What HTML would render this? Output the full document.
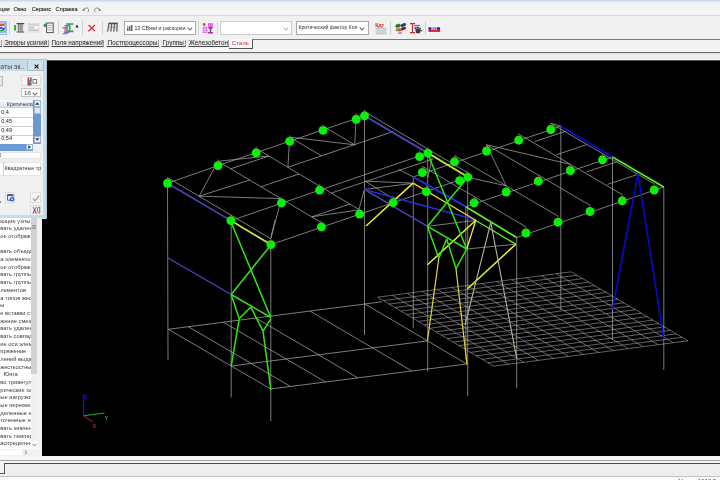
<!DOCTYPE html>
<html lang="ru">
<head>
<meta charset="utf-8">
<title>Результаты экспертизы - Сталь</title>
<style>
html,body{margin:0;padding:0;}
body>*{will-change:transform;}
body{width:720px;height:480px;overflow:hidden;position:relative;background:#f0f0f0;
 font-family:"Liberation Sans",sans-serif;font-size:6.2px;color:#202020;line-height:1;}
.abs{position:absolute;}
.t{position:absolute;white-space:nowrap;}
#topedge{left:0;top:0;width:720px;height:2px;background:linear-gradient(#c3d3e6,#e6ecf3);}
#menubar{left:0;top:2px;width:720px;height:13px;background:#f3f3f3;}
#menubar .t{top:4.8px;font-size:5.7px;color:#2c2c2c;letter-spacing:-0.06px;-webkit-text-stroke:0.15px #3a3a3a;}
#menuline{left:0;top:15px;width:720px;height:1px;background:#dadada;}
#toolbar{left:0;top:16px;width:720px;height:22.5px;background:#f1f1f1;}
.sep{position:absolute;top:5px;width:1px;height:14px;background:#d0d0d0;}
.combo{position:absolute;top:5.2px;height:13.8px;background:#fff;border:1px solid #a8a8a8;box-sizing:border-box;}
.combo .t{top:4.2px;font-size:5.4px;color:#303030;}
.chev{position:absolute;right:3.4px;top:4.2px;width:3px;height:3px;border-right:0.9px solid #555;border-bottom:0.9px solid #555;transform:rotate(45deg) scale(0.9);}
#tabrow{left:0;top:38.5px;width:720px;height:13px;background:#f2f2f2;}
.tab{position:absolute;top:1px;height:7.2px;font-size:6.3px;color:#222;border-bottom:1px solid #4a4a4a;border-right:1px solid #a2a2a2;border-left:1px solid #e4e4e4;box-sizing:border-box;background:#ececec;text-align:center;line-height:5.6px;white-space:nowrap;overflow:hidden;}
#tabline{left:252px;top:38.5px;width:468px;height:1px;background:#7a7a7a;}
#tabact{left:229px;top:38.5px;width:23.5px;height:9.5px;background:#fbfbfb;border-right:1px solid #555;border-bottom:1px solid #555;box-sizing:border-box;color:#e02020;font-size:6.1px;line-height:8px;text-align:center;}
#band{left:0;top:47.5px;width:229px;height:4px;background:#f8f8f8;}
#darkline{left:0;top:51.5px;width:720px;height:1.2px;background:#6a6a6a;}
#gap{left:0;top:52.7px;width:720px;height:6px;background:linear-gradient(#dcdcdc,#efefef 40%,#ececec);}
#vp{left:42px;top:59.6px;width:678.5px;height:396.4px;background:#000;border-top:1px solid #555;box-sizing:border-box;}
svg.cad{position:absolute;left:0;top:0;}
/* floating panel */
#fp{left:0;top:58.7px;width:46.7px;height:160.2px;background:#c7dce9;border-right:1px solid #a9bfcf;border-top:1px solid #b5c6d2;box-sizing:border-box;}
#fpbody{left:0;top:11.3px;width:42.7px;height:144px;background:#f0f0f0;}
#fpclose{left:27px;top:0.5px;width:16.5px;height:10.5px;border:1px solid #a5bccb;border-top:none;box-sizing:border-box;background:#cfe2ee;border-radius:0 0 1.5px 1.5px;}
.btn{position:absolute;background:#f6f6f6;border:1px solid #dedede;box-sizing:border-box;}
.cell{position:absolute;background:#fff;font-size:5.6px;color:#222;}
/* list pane */
#lp{left:0;top:217.5px;width:42px;height:238.5px;background:#f2f2f2;}
#lpw{left:0;top:0;width:30.6px;height:231px;background:#fff;overflow:hidden;}
#lpw .t{font-size:5.75px;color:#3c3c3c;left:0.3px;}
#sbv{left:30.6px;top:0;width:6.9px;height:231px;background:#f0f0f0;}
#sbthumb{left:30.6px;top:0;width:6.9px;height:156px;background:#d2d2d2;}
/* bottom */
#b1{left:0;top:456px;width:720px;height:4px;background:#f6f6f6;}
#b2{left:0;top:459.8px;width:720px;height:1px;background:#a4a4a4;}
#b3{left:0;top:460.8px;width:720px;height:2.2px;background:#f6f6f6;}
#b4{left:3.6px;top:462.8px;width:716.4px;height:1.2px;background:#4c4c4c;}
#b5{left:3.6px;top:464px;width:716.4px;height:11.8px;background:#eeeeee;}
#b5a{left:0;top:463px;width:3.6px;height:10.6px;background:#f3f3f3;}
#b6{left:0;top:475.8px;width:720px;height:1px;background:#c2c2c2;}
#b6a{left:0;top:473.4px;width:4.4px;height:1px;background:#555;}
#b6b{left:3.6px;top:464px;width:1px;height:10px;background:#555;}
#b7{left:0;top:476.8px;width:720px;height:3.2px;background:#fbfbfb;}
#b8{left:677.6px;top:477px;width:1px;height:3px;background:#d0d0d0;}
</style>
</head>
<body>
<div id="topedge" class="abs"></div>
<div id="menubar" class="abs">
 <span class="t" style="left:0.3px">ции</span>
 <span class="t" style="left:13.4px">Окно</span>
 <span class="t" style="left:31.8px">Сервис</span>
 <span class="t" style="left:55.6px">Справка</span>
 <svg class="abs" style="left:81px;top:2.5px" width="22" height="9" viewBox="0 0 22 9">
  <path d="M2.6 4.7 C3.8 2.7 6.4 2.3 7.4 4 C8.1 5.2 7.5 6.4 6.7 7.2" fill="none" stroke="#7c7c7c" stroke-width="0.95"/>
  <path d="M0.9 5.5 L3.1 3.5 L3.7 5.7 Z" fill="#5c5c5c"/>
  <path d="M18.6 4.7 C17.4 2.7 14.8 2.3 13.8 4 C13.1 5.2 13.7 6.4 14.5 7.2" fill="none" stroke="#7c7c7c" stroke-width="0.95"/>
  <path d="M20.3 5.5 L18.1 3.5 L17.5 5.7 Z" fill="#5c5c5c"/>
 </svg>
</div>
<div id="menuline" class="abs"></div>

<div id="toolbar" class="abs">
 <!-- selected first icon (cut off at the left) -->
 <div class="abs" style="left:-4px;top:4.5px;width:10.6px;height:14px;background:#d2e8fb;border:1px solid #86bff0;box-sizing:border-box;"></div>
 <svg class="abs" style="left:0;top:6px" width="6" height="11" viewBox="0 0 6 11">
  <rect x="-2" y="1" width="7" height="9" fill="#fff" stroke="#555" stroke-width="0.7"/>
  <rect x="-2" y="2.2" width="6.4" height="1.6" fill="#e02020"/>
  <path d="M-1 7 L1.5 5.4 L3.2 7.6 L4.6 5.6" stroke="#1a3ad0" stroke-width="1.3" fill="none"/>
  <rect x="-2" y="7.8" width="5.5" height="1.4" fill="#2a9a2a"/>
 </svg>
 <div class="sep" style="left:9.3px"></div>
 <!-- icon: green/gray result table -->
 <svg class="abs" style="left:12.5px;top:5px" width="12" height="14" viewBox="0 0 12 14">
  <rect x="1.2" y="4" width="1.9" height="5.6" fill="#2aa63c"/>
  <rect x="4.4" y="3" width="5.8" height="7.6" fill="#dcdcdc"/>
  <path d="M5.6 3V10.6 M7.3 3V10.6 M9 3V10.6" stroke="#5a5a5a" stroke-width="0.8"/>
  <path d="M4.4 5.4H10.2 M4.4 7.8H10.2" stroke="#8a8a8a" stroke-width="0.6"/>
  <path d="M3.6 2.6H11.2 M3.6 11H11.2" stroke="#4a4a4a" stroke-width="1.2"/>
 </svg>
 <!-- icon: grey lines (disabled) -->
 <svg class="abs" style="left:28px;top:7px" width="12" height="10" viewBox="0 0 12 10">
  <rect x="0.5" y="0.5" width="10.5" height="8.6" fill="#ececec" stroke="#d2d2d2" stroke-width="0.6"/>
  <path d="M1 2H10.5 M1 4.6H10.5 M1 7.2H10.5" stroke="#bcbcbc" stroke-width="1.2"/>
  <rect x="6.5" y="3.2" width="4" height="2.4" fill="#fafafa"/>
 </svg>
 <!-- icon: list with green marker -->
 <svg class="abs" style="left:42.5px;top:6px" width="12" height="12" viewBox="0 0 12 12">
  <rect x="3.6" y="1" width="6.6" height="9.6" fill="#f4f4f4" stroke="#4a4a4a" stroke-width="0.9"/>
  <path d="M4.4 3.4H9.6 M4.4 5.6H9.6 M4.4 7.8H9.6" stroke="#9a9a9a" stroke-width="0.7"/>
  <circle cx="2.3" cy="3.3" r="1.5" fill="#3aa06a" stroke="#2a6a4a" stroke-width="0.5"/>
 </svg>
 <div class="sep" style="left:58.3px"></div>
 <!-- icon: coloured I-beams -->
 <svg class="abs" style="left:61.5px;top:5.5px" width="14" height="13" viewBox="0 0 14 13">
  <path d="M0.6 5.8H5.6 M3.2 5.8V11.6 M0.6 11.6H5.6" stroke="#ea5a5a" stroke-width="1.4" fill="none"/>
  <path d="M2.4 3.6H7.4 M5 3.6V10.4 M2.4 10.4H7.4" stroke="#6274d6" stroke-width="1.4" fill="none"/>
  <path d="M4.2 2H11.4 M7.6 2V9.4 M5 9.4H11.4" stroke="#36a052" stroke-width="1.7" fill="none"/>
 </svg>
 <svg class="abs" style="left:74.6px;top:8.4px" width="4" height="5" viewBox="0 0 4 5"><path d="M2 0.4L3.6 3.6H0.4Z" fill="#222"/></svg>
 <div class="sep" style="left:82.3px"></div>
 <!-- red X -->
 <svg class="abs" style="left:86.8px;top:6.6px" width="10" height="10" viewBox="0 0 10 10">
  <path d="M1.6 2L7.8 8.2 M8 2L1.4 8.2" stroke="#dc2626" stroke-width="1.2" fill="none"/>
 </svg>
 <div class="sep" style="left:102.3px"></div>
 <!-- fork / comb icon -->
 <svg class="abs" style="left:105.6px;top:6.4px" width="13" height="11" viewBox="0 0 13 11">
  <path d="M2.6 1.4H11.6" stroke="#4e4e4e" stroke-width="1.6"/>
  <path d="M3 1.4L1.6 9.6 M5.8 1.4L4.8 9.6 M8.6 1.4L7.8 9.6 M11.2 1.4L10.8 9.6" stroke="#565656" stroke-width="1.2" fill="none"/>
  <path d="M2 5.2H11.2" stroke="#8a8a8a" stroke-width="0.8"/>
 </svg>
 <!-- combo 1 -->
 <div class="combo" style="left:124.4px;width:72px;">
  <svg class="abs" style="left:2px;top:3px" width="7" height="6" viewBox="0 0 7 6"><path d="M0.8 2.6V6 M2.8 1V6 M4.8 0V6" stroke="#333" stroke-width="1.1"/><rect x="0.2" y="0.6" width="1.2" height="1.2" fill="#d040c0"/></svg>
  <span class="t" style="left:9px;font-size:5.25px">13:СВязи и распорки</span>
  <div class="chev"></div>
 </div>
 <div class="sep" style="left:198.2px"></div>
 <!-- pink grid icon -->
 <svg class="abs" style="left:202px;top:6px" width="13" height="13" viewBox="0 0 13 13">
  <circle cx="2.2" cy="2.4" r="1.4" fill="#c84a4a"/>
  <g fill="#e45ce4">
   <rect x="0.8" y="4.6" width="1.3" height="1.3"/><rect x="2.4" y="4.6" width="1.3" height="1.3"/><rect x="4" y="4.6" width="1.3" height="1.3"/>
   <rect x="0.8" y="6.3" width="1.3" height="1.3"/><rect x="2.4" y="6.3" width="1.3" height="1.3"/><rect x="4" y="6.3" width="1.3" height="1.3"/>
   <rect x="0.8" y="8" width="1.3" height="1.3"/><rect x="2.4" y="8" width="1.3" height="1.3"/><rect x="4" y="8" width="1.3" height="1.3"/>
   <rect x="0.8" y="9.7" width="1.3" height="1.3"/><rect x="2.4" y="9.7" width="1.3" height="1.3"/><rect x="4" y="9.7" width="1.3" height="1.3"/>
  </g>
  <g fill="#d848d8"><rect x="6.1" y="1.1" width="1.3" height="3.6"/><rect x="7.8" y="1.1" width="1.3" height="3.6"/><rect x="9.5" y="1.1" width="1.3" height="3.6"/></g>
  <path d="M6 4.8H11 L10.2 6.8H6.8Z" fill="#a81cb0"/>
  <rect x="7.8" y="6.6" width="1.5" height="3.8" fill="#a81cb0"/>
  <rect x="6" y="10.1" width="5" height="1.4" fill="#a81cb0"/>
 </svg>
 <div class="abs" style="left:217.4px;top:5px;width:1px;height:14px;background:#dcdcdc;"></div>
 <!-- combo 2 -->
 <div class="combo" style="left:220px;width:72px;border-color:#cdcdcd"><div class="chev" style="border-color:#aaa"></div></div>
 <!-- combo 3 -->
 <div class="combo" style="left:296px;width:72.6px;">
  <span class="t" style="left:1.4px;top:2.6px;font-size:5.15px">Критический фактор Кпи</span>
  <div class="chev"></div>
 </div>
 <!-- Кдт grid icon -->
 <svg class="abs" style="left:374.5px;top:5.5px" width="13" height="13" viewBox="0 0 13 13">
  <path d="M0.6 6.4H11.4 M0.6 8.2H11.4 M0.6 10H11.4 M0.6 11.8H11.4" stroke="#a4b2c2" stroke-width="0.9"/>
  <path d="M2.8 5.6V12.2 M5 5.6V12.2 M7.2 5.6V12.2 M9.4 5.6V12.2" stroke="#cfd6de" stroke-width="0.6"/>
  <text x="0.3" y="5.4" font-size="5.4" fill="#d42a2a" font-family="Liberation Sans, sans-serif" font-weight="bold" letter-spacing="-0.3">Кдт</text>
 </svg>
 <div class="sep" style="left:390.3px"></div>
 <!-- coloured flags icon -->
 <svg class="abs" style="left:393.5px;top:5.5px" width="14" height="13" viewBox="0 0 14 13">
  <ellipse cx="4" cy="3.6" rx="2.8" ry="1.6" fill="#1a8a3a" transform="rotate(-20 4 3.6)"/>
  <ellipse cx="9.4" cy="3" rx="2.8" ry="1.6" fill="#2a3ab0" transform="rotate(-20 9.4 3)"/>
  <ellipse cx="4" cy="7" rx="2.6" ry="1.4" fill="#c8a020" transform="rotate(-20 4 7)"/>
  <ellipse cx="9.4" cy="6.6" rx="2.8" ry="1.6" fill="#b02020" transform="rotate(-20 9.4 6.6)"/>
  <path d="M2 5.2L12 2.6 M2 8.8L12 5.8" stroke="#222" stroke-width="0.6"/>
  <text x="4.2" y="12.4" font-size="4.6" fill="#c02020" font-family="Liberation Sans, sans-serif" font-weight="bold">G</text>
 </svg>
 <!-- I-beam with paw icon -->
 <svg class="abs" style="left:408.5px;top:5.5px" width="14" height="13" viewBox="0 0 14 13">
  <path d="M1 1.6H6 M3.5 1.6V10.6 M1 10.6H6" stroke="#c02828" stroke-width="1.1" fill="none"/>
  <path d="M5.2 3.4H11 M5.2 5.2H10" stroke="#3a48c8" stroke-width="0.9"/>
  <circle cx="9" cy="9" r="2.5" fill="#3c3c3c"/><circle cx="6.6" cy="6.8" r="1" fill="#444"/><circle cx="8.8" cy="5.8" r="1" fill="#444"/><circle cx="11" cy="6.6" r="1" fill="#444"/><circle cx="12.2" cy="8.6" r="0.9" fill="#444"/>
 </svg>
 <div class="sep" style="left:424.5px"></div>
 <!-- flag icon -->
 <svg class="abs" style="left:428px;top:8.6px" width="13" height="8" viewBox="0 0 13 8">
  <rect x="0.5" y="0.3" width="11.6" height="2.2" fill="#f4f4fa"/>
  <rect x="0.5" y="2.3" width="11.6" height="2.6" fill="#1a1ad8"/>
  <rect x="0.5" y="4.7" width="11.6" height="2.2" fill="#e02020"/>
  <text x="3.2" y="4.6" font-size="2.8" fill="#fff" font-family="Liberation Sans, sans-serif" font-weight="bold">RUS</text>
 </svg>
</div>

<div id="tabrow" class="abs">
 <div class="tab" style="left:-6px;width:7.6px;"></div>
 <div class="tab" style="left:2.6px;width:46.4px;">Эпюры усилий</div>
 <div class="tab" style="left:50.6px;width:53.4px;">Поля напряжений</div>
 <div class="tab" style="left:106.2px;width:52.6px;">Постпроцессоры</div>
 <div class="tab" style="left:160.6px;width:25.4px;">Группы</div>
 <div class="tab" style="left:188px;width:40.5px;">Железобетон</div>
</div>
<div id="tabline" class="abs"></div>
<div id="band" class="abs"></div>
<div id="tabact" class="abs">Сталь</div>
<div id="darkline" class="abs"></div>
<div id="gap" class="abs"></div>

<div id="vp" class="abs"></div>
<svg class="cad" width="720" height="480" viewBox="0 0 720 480" font-family="Liberation Sans, sans-serif">
<g stroke-linecap="butt" fill="none">
<line x1="167.5" y1="183.3" x2="218.0" y2="165.6" stroke="#a4a4a4" stroke-width="0.75"/>
<line x1="218.0" y1="165.6" x2="364.5" y2="115.8" stroke="#a4a4a4" stroke-width="0.75"/>
<line x1="230.9" y1="220.6" x2="427.9" y2="153.1" stroke="#a4a4a4" stroke-width="0.75"/>
<line x1="270.9" y1="244.6" x2="467.9" y2="177.1" stroke="#a4a4a4" stroke-width="0.75"/>
<line x1="167.5" y1="177.5" x2="270.9" y2="238.8" stroke="#a4a4a4" stroke-width="0.75"/>
<line x1="364.5" y1="111.5" x2="467.9" y2="172.8" stroke="#a4a4a4" stroke-width="0.75"/>
<line x1="218.0" y1="161.3" x2="321.4" y2="222.6" stroke="#a4a4a4" stroke-width="0.75"/>
<line x1="256.2" y1="148.5" x2="359.6" y2="209.8" stroke="#a4a4a4" stroke-width="0.75"/>
<line x1="289.7" y1="137.1" x2="321.4" y2="155.8" stroke="#a4a4a4" stroke-width="0.75"/>
<line x1="323.0" y1="126.1" x2="354.7" y2="144.8" stroke="#a4a4a4" stroke-width="0.75"/>
<line x1="199.2" y1="196.2" x2="249.7" y2="180.0" stroke="#a4a4a4" stroke-width="0.75"/>
<line x1="287.9" y1="167.2" x2="392.9" y2="131.6" stroke="#a4a4a4" stroke-width="0.75"/>
<line x1="218.0" y1="161.3" x2="199.2" y2="196.2" stroke="#a4a4a4" stroke-width="0.75"/>
<line x1="199.2" y1="196.2" x2="281.4" y2="198.6" stroke="#a4a4a4" stroke-width="0.75"/>
<line x1="218.0" y1="161.3" x2="268.9" y2="156.0" stroke="#a4a4a4" stroke-width="0.75"/>
<line x1="230.7" y1="168.8" x2="268.9" y2="156.0" stroke="#a4a4a4" stroke-width="0.75"/>
<line x1="289.7" y1="137.1" x2="287.9" y2="167.2" stroke="#a4a4a4" stroke-width="0.75"/>
<line x1="289.7" y1="137.1" x2="354.7" y2="144.8" stroke="#a4a4a4" stroke-width="0.75"/>
<line x1="356.2" y1="115.0" x2="354.7" y2="144.8" stroke="#a4a4a4" stroke-width="0.75"/>
<line x1="261.1" y1="186.7" x2="299.3" y2="173.9" stroke="#a4a4a4" stroke-width="0.75"/>
<line x1="281.4" y1="198.6" x2="270.9" y2="238.8" stroke="#a4a4a4" stroke-width="0.75"/>
<line x1="311.8" y1="216.8" x2="350.0" y2="204.0" stroke="#a4a4a4" stroke-width="0.75"/>
<line x1="311.8" y1="216.8" x2="359.6" y2="209.8" stroke="#a4a4a4" stroke-width="0.75"/>
<line x1="331.6" y1="193.0" x2="432.4" y2="159.2" stroke="#a4a4a4" stroke-width="0.75"/>
<line x1="167.5" y1="177.5" x2="168.0" y2="360.0" stroke="#a4a4a4" stroke-width="0.75"/>
<line x1="231.2" y1="215.0" x2="231.2" y2="397.5" stroke="#a4a4a4" stroke-width="0.75"/>
<line x1="270.8" y1="240.0" x2="270.8" y2="421.2" stroke="#a4a4a4" stroke-width="0.75"/>
<line x1="364.5" y1="110.5" x2="364.5" y2="335.0" stroke="#a4a4a4" stroke-width="0.75"/>
<line x1="427.7" y1="148.0" x2="427.7" y2="371.7" stroke="#a4a4a4" stroke-width="0.75"/>
<line x1="467.7" y1="172.5" x2="467.7" y2="396.0" stroke="#a4a4a4" stroke-width="0.75"/>
<line x1="427.7" y1="178.0" x2="432.3" y2="158.0" stroke="#a4a4a4" stroke-width="0.75"/>
<line x1="270.8" y1="237.5" x2="275.0" y2="220.0" stroke="#a4a4a4" stroke-width="0.75"/>
<line x1="365.0" y1="181.2" x2="413.1" y2="183.1" stroke="#a4a4a4" stroke-width="0.75"/>
<line x1="364.4" y1="189.4" x2="411.0" y2="183.6" stroke="#a4a4a4" stroke-width="0.75"/>
<line x1="365.0" y1="181.2" x2="395.0" y2="199.5" stroke="#a4a4a4" stroke-width="0.75"/>
<line x1="358.9" y1="209.5" x2="364.4" y2="189.4" stroke="#a4a4a4" stroke-width="0.75"/>
<line x1="398.8" y1="169.4" x2="413.1" y2="176.9" stroke="#a4a4a4" stroke-width="0.75"/>
<line x1="427.5" y1="226.3" x2="475.8" y2="220.3" stroke="#a4a4a4" stroke-width="0.75"/>
<line x1="466.7" y1="249.0" x2="515.8" y2="244.2" stroke="#a4a4a4" stroke-width="0.75"/>
<line x1="413.3" y1="176.9" x2="413.3" y2="328.3" stroke="#a4a4a4" stroke-width="0.75"/>
<line x1="465.8" y1="206.7" x2="465.8" y2="358.3" stroke="#a4a4a4" stroke-width="0.75"/>
<line x1="516.7" y1="237.5" x2="516.7" y2="388.3" stroke="#a4a4a4" stroke-width="0.75"/>
<line x1="413.3" y1="176.9" x2="560.8" y2="126.2" stroke="#a4a4a4" stroke-width="0.75"/>
<line x1="465.8" y1="206.7" x2="612.5" y2="157.0" stroke="#a4a4a4" stroke-width="0.75"/>
<line x1="516.7" y1="237.5" x2="663.8" y2="187.0" stroke="#a4a4a4" stroke-width="0.75"/>
<line x1="550.8" y1="123.3" x2="560.8" y2="126.2" stroke="#a4a4a4" stroke-width="0.75"/>
<line x1="422.4" y1="166.3" x2="525.9" y2="226.8" stroke="#a4a4a4" stroke-width="0.75"/>
<line x1="454.5" y1="155.6" x2="558.0" y2="216.1" stroke="#a4a4a4" stroke-width="0.75"/>
<line x1="486.6" y1="144.8" x2="590.0" y2="205.3" stroke="#a4a4a4" stroke-width="0.75"/>
<line x1="518.7" y1="134.1" x2="622.2" y2="194.6" stroke="#a4a4a4" stroke-width="0.75"/>
<line x1="550.8" y1="123.3" x2="654.2" y2="183.8" stroke="#a4a4a4" stroke-width="0.75"/>
<line x1="560.8" y1="126.2" x2="560.8" y2="310.0" stroke="#a4a4a4" stroke-width="0.75"/>
<line x1="612.5" y1="157.0" x2="612.5" y2="340.0" stroke="#a4a4a4" stroke-width="0.75"/>
<line x1="663.8" y1="187.0" x2="663.8" y2="370.0" stroke="#a4a4a4" stroke-width="0.75"/>
<line x1="534.6" y1="141.6" x2="566.5" y2="131.0" stroke="#a4a4a4" stroke-width="0.75"/>
<line x1="556.5" y1="154.8" x2="586.7" y2="144.6" stroke="#a4a4a4" stroke-width="0.75"/>
<line x1="586.7" y1="171.8" x2="617.5" y2="161.6" stroke="#a4a4a4" stroke-width="0.75"/>
<line x1="607.5" y1="184.4" x2="637.7" y2="174.4" stroke="#a4a4a4" stroke-width="0.75"/>
<line x1="486.6" y1="144.8" x2="570.4" y2="164.3" stroke="#a4a4a4" stroke-width="0.75"/>
<line x1="486.6" y1="144.8" x2="506.2" y2="185.8" stroke="#a4a4a4" stroke-width="0.75"/>
<line x1="467.2" y1="177.2" x2="506.2" y2="185.8" stroke="#a4a4a4" stroke-width="0.75"/>
<line x1="168.3" y1="329.3" x2="270.7" y2="389.0" stroke="#a4a4a4" stroke-width="0.75"/>
<line x1="168.3" y1="329.3" x2="382.0" y2="301.8" stroke="#a4a4a4" stroke-width="0.75"/>
<line x1="270.7" y1="389.0" x2="466.7" y2="364.0" stroke="#a4a4a4" stroke-width="0.75"/>
<line x1="231.3" y1="366.0" x2="427.5" y2="340.9" stroke="#a4a4a4" stroke-width="0.75"/>
<line x1="188.3" y1="326.7" x2="290.6" y2="386.5" stroke="#a4a4a4" stroke-width="0.75"/>
<line x1="223.3" y1="322.2" x2="325.5" y2="382.0" stroke="#a4a4a4" stroke-width="0.75"/>
<line x1="255.8" y1="318.0" x2="357.9" y2="377.9" stroke="#a4a4a4" stroke-width="0.75"/>
<line x1="310.0" y1="311.1" x2="411.9" y2="371.0" stroke="#a4a4a4" stroke-width="0.75"/>
<line x1="365.0" y1="304.0" x2="466.7" y2="364.0" stroke="#a4a4a4" stroke-width="0.75"/>
<line x1="377.5" y1="297.2" x2="493.8" y2="366.2" stroke="#a2a2a2" stroke-width="0.60"/>
<line x1="392.4" y1="295.3" x2="508.7" y2="364.3" stroke="#a2a2a2" stroke-width="0.60"/>
<line x1="407.3" y1="293.3" x2="523.6" y2="362.3" stroke="#a2a2a2" stroke-width="0.60"/>
<line x1="422.2" y1="291.4" x2="538.6" y2="360.4" stroke="#a2a2a2" stroke-width="0.60"/>
<line x1="437.1" y1="289.4" x2="553.5" y2="358.4" stroke="#a2a2a2" stroke-width="0.60"/>
<line x1="452.0" y1="287.4" x2="568.5" y2="356.4" stroke="#a2a2a2" stroke-width="0.60"/>
<line x1="466.9" y1="285.5" x2="583.4" y2="354.5" stroke="#a2a2a2" stroke-width="0.60"/>
<line x1="481.8" y1="283.5" x2="598.3" y2="352.5" stroke="#a2a2a2" stroke-width="0.60"/>
<line x1="496.7" y1="281.6" x2="613.3" y2="350.6" stroke="#a2a2a2" stroke-width="0.60"/>
<line x1="511.6" y1="279.6" x2="628.2" y2="348.6" stroke="#a2a2a2" stroke-width="0.60"/>
<line x1="526.5" y1="277.6" x2="643.2" y2="346.6" stroke="#a2a2a2" stroke-width="0.60"/>
<line x1="541.4" y1="275.7" x2="658.1" y2="344.7" stroke="#a2a2a2" stroke-width="0.60"/>
<line x1="556.3" y1="273.7" x2="673.1" y2="342.7" stroke="#a2a2a2" stroke-width="0.60"/>
<line x1="571.2" y1="271.8" x2="688.0" y2="340.8" stroke="#a2a2a2" stroke-width="0.60"/>
<line x1="377.5" y1="297.2" x2="571.2" y2="271.8" stroke="#a2a2a2" stroke-width="0.60"/>
<line x1="383.3" y1="300.7" x2="577.1" y2="275.2" stroke="#a2a2a2" stroke-width="0.60"/>
<line x1="389.1" y1="304.1" x2="582.9" y2="278.6" stroke="#a2a2a2" stroke-width="0.60"/>
<line x1="394.9" y1="307.6" x2="588.8" y2="282.1" stroke="#a2a2a2" stroke-width="0.60"/>
<line x1="400.8" y1="311.1" x2="594.6" y2="285.6" stroke="#a2a2a2" stroke-width="0.60"/>
<line x1="406.6" y1="314.5" x2="600.4" y2="289.0" stroke="#a2a2a2" stroke-width="0.60"/>
<line x1="412.4" y1="317.9" x2="606.3" y2="292.4" stroke="#a2a2a2" stroke-width="0.60"/>
<line x1="418.2" y1="321.4" x2="612.1" y2="295.9" stroke="#a2a2a2" stroke-width="0.60"/>
<line x1="424.0" y1="324.9" x2="618.0" y2="299.4" stroke="#a2a2a2" stroke-width="0.60"/>
<line x1="429.8" y1="328.3" x2="623.8" y2="302.8" stroke="#a2a2a2" stroke-width="0.60"/>
<line x1="435.6" y1="331.8" x2="629.6" y2="306.2" stroke="#a2a2a2" stroke-width="0.60"/>
<line x1="441.4" y1="335.2" x2="635.5" y2="309.7" stroke="#a2a2a2" stroke-width="0.60"/>
<line x1="447.2" y1="338.6" x2="641.3" y2="313.1" stroke="#a2a2a2" stroke-width="0.60"/>
<line x1="453.1" y1="342.1" x2="647.1" y2="316.6" stroke="#a2a2a2" stroke-width="0.60"/>
<line x1="458.9" y1="345.6" x2="653.0" y2="320.1" stroke="#a2a2a2" stroke-width="0.60"/>
<line x1="464.7" y1="349.0" x2="658.8" y2="323.5" stroke="#a2a2a2" stroke-width="0.60"/>
<line x1="470.5" y1="352.4" x2="664.6" y2="326.9" stroke="#a2a2a2" stroke-width="0.60"/>
<line x1="476.3" y1="355.9" x2="670.5" y2="330.4" stroke="#a2a2a2" stroke-width="0.60"/>
<line x1="482.1" y1="359.4" x2="676.3" y2="333.9" stroke="#a2a2a2" stroke-width="0.60"/>
<line x1="487.9" y1="362.8" x2="682.2" y2="337.3" stroke="#a2a2a2" stroke-width="0.60"/>
<line x1="493.8" y1="366.2" x2="688.0" y2="340.8" stroke="#a2a2a2" stroke-width="0.60"/>
<line x1="167.5" y1="183.3" x2="230.9" y2="220.6" stroke="#4846be" stroke-width="1.60"/>
<line x1="230.9" y1="220.6" x2="270.9" y2="244.6" stroke="#c4ec3c" stroke-width="1.70"/>
<line x1="364.5" y1="115.8" x2="427.9" y2="153.1" stroke="#4846be" stroke-width="1.80"/>
<line x1="427.9" y1="153.1" x2="467.9" y2="177.1" stroke="#c4ec3c" stroke-width="1.80"/>
<line x1="168.0" y1="258.0" x2="231.2" y2="294.5" stroke="#4846be" stroke-width="1.30"/>
<line x1="231.2" y1="222.5" x2="270.8" y2="317.5" stroke="#34e414" stroke-width="1.50"/>
<line x1="270.8" y1="245.0" x2="231.2" y2="294.5" stroke="#34e414" stroke-width="1.50"/>
<line x1="231.2" y1="294.5" x2="270.8" y2="317.5" stroke="#34e414" stroke-width="1.50"/>
<line x1="231.2" y1="294.5" x2="239.2" y2="318.8" stroke="#34e414" stroke-width="1.50"/>
<line x1="239.2" y1="318.8" x2="250.8" y2="307.0" stroke="#34e414" stroke-width="1.50"/>
<line x1="250.8" y1="307.0" x2="263.0" y2="331.2" stroke="#34e414" stroke-width="1.50"/>
<line x1="263.0" y1="331.2" x2="270.8" y2="318.8" stroke="#34e414" stroke-width="1.50"/>
<line x1="239.2" y1="318.8" x2="231.2" y2="366.2" stroke="#34e414" stroke-width="1.50"/>
<line x1="263.0" y1="331.2" x2="270.8" y2="389.5" stroke="#34e414" stroke-width="1.50"/>
<line x1="364.4" y1="189.4" x2="427.5" y2="226.3" stroke="#4846be" stroke-width="1.40"/>
<line x1="364.4" y1="189.4" x2="475.5" y2="219.8" stroke="#2c2cd0" stroke-width="1.60"/>
<line x1="413.1" y1="176.9" x2="465.8" y2="206.7" stroke="#2c2cd0" stroke-width="1.90"/>
<line x1="465.8" y1="206.7" x2="516.7" y2="237.5" stroke="#58f020" stroke-width="1.70"/>
<line x1="413.1" y1="183.1" x2="475.8" y2="220.3" stroke="#e0d648" stroke-width="1.30"/>
<line x1="475.8" y1="220.5" x2="515.8" y2="244.2" stroke="#58f020" stroke-width="1.40"/>
<line x1="413.1" y1="183.1" x2="366.0" y2="226.0" stroke="#f0f020" stroke-width="1.50"/>
<line x1="475.8" y1="220.3" x2="427.5" y2="264.7" stroke="#f0f020" stroke-width="1.50"/>
<line x1="515.8" y1="244.2" x2="467.5" y2="288.7" stroke="#f0f020" stroke-width="1.50"/>
<line x1="475.8" y1="220.3" x2="466.7" y2="249.0" stroke="#f0f020" stroke-width="1.30"/>
<line x1="428.3" y1="155.0" x2="466.7" y2="249.0" stroke="#34e414" stroke-width="1.50"/>
<line x1="466.9" y1="178.3" x2="427.5" y2="226.3" stroke="#34e414" stroke-width="1.50"/>
<line x1="427.5" y1="226.3" x2="466.7" y2="249.0" stroke="#34e414" stroke-width="1.50"/>
<line x1="427.5" y1="226.3" x2="438.8" y2="258.3" stroke="#34e414" stroke-width="1.50"/>
<line x1="438.8" y1="258.3" x2="446.7" y2="239.0" stroke="#34e414" stroke-width="1.50"/>
<line x1="446.7" y1="239.0" x2="456.0" y2="268.7" stroke="#34e414" stroke-width="1.50"/>
<line x1="456.0" y1="268.7" x2="466.7" y2="249.0" stroke="#34e414" stroke-width="1.50"/>
<line x1="438.8" y1="258.3" x2="427.5" y2="340.5" stroke="#e0d648" stroke-width="1.20"/>
<line x1="456.0" y1="268.7" x2="467.0" y2="364.5" stroke="#e0d648" stroke-width="1.20"/>
<line x1="490.8" y1="222.5" x2="465.0" y2="325.0" stroke="#b4b49c" stroke-width="1.10"/>
<line x1="490.8" y1="222.5" x2="516.7" y2="358.3" stroke="#b4b49c" stroke-width="1.10"/>
<line x1="560.8" y1="126.2" x2="612.5" y2="157.0" stroke="#0a0ad4" stroke-width="1.60"/>
<line x1="612.5" y1="157.0" x2="663.8" y2="187.0" stroke="#58f020" stroke-width="1.50"/>
<line x1="638.0" y1="173.8" x2="612.5" y2="308.8" stroke="#0a0ad4" stroke-width="1.50"/>
<line x1="638.0" y1="173.8" x2="663.8" y2="338.8" stroke="#0a0ad4" stroke-width="1.50"/>
</g>
<g fill="#06f40a">
<circle cx="167.5" cy="183.3" r="4.45"/>
<circle cx="270.9" cy="244.6" r="4.45"/>
<circle cx="218.0" cy="165.6" r="4.45"/>
<circle cx="321.4" cy="226.9" r="4.45"/>
<circle cx="256.2" cy="152.8" r="4.45"/>
<circle cx="359.6" cy="214.1" r="4.45"/>
<circle cx="289.7" cy="141.4" r="4.45"/>
<circle cx="393.1" cy="202.7" r="4.45"/>
<circle cx="323.0" cy="130.4" r="4.45"/>
<circle cx="426.4" cy="191.7" r="4.45"/>
<circle cx="356.2" cy="119.3" r="4.45"/>
<circle cx="459.6" cy="180.6" r="4.45"/>
<circle cx="364.5" cy="115.8" r="4.45"/>
<circle cx="467.9" cy="177.1" r="4.45"/>
<circle cx="230.9" cy="220.6" r="4.45"/>
<circle cx="281.4" cy="202.9" r="4.45"/>
<circle cx="319.6" cy="190.1" r="4.45"/>
<circle cx="419.6" cy="156.6" r="4.45"/>
<circle cx="427.9" cy="153.1" r="4.45"/>
<circle cx="422.4" cy="172.5" r="4.45"/>
<circle cx="474.1" cy="202.8" r="4.45"/>
<circle cx="525.9" cy="233.0" r="4.45"/>
<circle cx="454.5" cy="161.8" r="4.45"/>
<circle cx="506.2" cy="192.0" r="4.45"/>
<circle cx="558.0" cy="222.2" r="4.45"/>
<circle cx="486.6" cy="151.0" r="4.45"/>
<circle cx="538.3" cy="181.2" r="4.45"/>
<circle cx="590.0" cy="211.5" r="4.45"/>
<circle cx="518.7" cy="140.2" r="4.45"/>
<circle cx="570.4" cy="170.5" r="4.45"/>
<circle cx="622.2" cy="200.8" r="4.45"/>
<circle cx="550.8" cy="129.5" r="4.45"/>
<circle cx="602.5" cy="159.8" r="4.45"/>
<circle cx="654.2" cy="190.0" r="4.45"/>
</g>
<g stroke="#9c5a26" stroke-width="0.8">
<line x1="167.5" y1="176.9" x2="167.5" y2="179.3"/>
<line x1="270.9" y1="238.2" x2="270.9" y2="240.6"/>
<line x1="218.0" y1="159.2" x2="218.0" y2="161.6"/>
<line x1="321.4" y1="220.5" x2="321.4" y2="222.9"/>
<line x1="256.2" y1="146.4" x2="256.2" y2="148.8"/>
<line x1="359.6" y1="207.7" x2="359.6" y2="210.1"/>
<line x1="289.7" y1="135.0" x2="289.7" y2="137.4"/>
<line x1="393.1" y1="196.3" x2="393.1" y2="198.7"/>
<line x1="323.0" y1="124.0" x2="323.0" y2="126.4"/>
<line x1="426.4" y1="185.3" x2="426.4" y2="187.7"/>
<line x1="356.2" y1="112.9" x2="356.2" y2="115.3"/>
<line x1="459.6" y1="174.2" x2="459.6" y2="176.6"/>
<line x1="364.5" y1="109.4" x2="364.5" y2="111.8"/>
<line x1="467.9" y1="170.7" x2="467.9" y2="173.1"/>
<line x1="230.9" y1="214.2" x2="230.9" y2="216.6"/>
<line x1="281.4" y1="196.5" x2="281.4" y2="198.9"/>
<line x1="319.6" y1="183.7" x2="319.6" y2="186.1"/>
<line x1="419.6" y1="150.2" x2="419.6" y2="152.6"/>
<line x1="427.9" y1="146.7" x2="427.9" y2="149.1"/>
<line x1="422.4" y1="166.1" x2="422.4" y2="168.5"/>
<line x1="474.1" y1="196.3" x2="474.1" y2="198.8"/>
<line x1="525.9" y1="226.6" x2="525.9" y2="229.0"/>
<line x1="454.5" y1="155.3" x2="454.5" y2="157.8"/>
<line x1="506.2" y1="185.6" x2="506.2" y2="188.0"/>
<line x1="558.0" y1="215.8" x2="558.0" y2="218.2"/>
<line x1="486.6" y1="144.6" x2="486.6" y2="147.0"/>
<line x1="538.3" y1="174.8" x2="538.3" y2="177.2"/>
<line x1="590.0" y1="205.1" x2="590.0" y2="207.5"/>
<line x1="518.7" y1="133.8" x2="518.7" y2="136.2"/>
<line x1="570.4" y1="164.1" x2="570.4" y2="166.5"/>
<line x1="622.2" y1="194.3" x2="622.2" y2="196.8"/>
<line x1="550.8" y1="123.1" x2="550.8" y2="125.5"/>
<line x1="602.5" y1="153.3" x2="602.5" y2="155.8"/>
<line x1="654.2" y1="183.6" x2="654.2" y2="186.0"/>
</g>
<g stroke="#9c5a26" stroke-width="0.8" opacity="0.45">
<line x1="167.5" y1="179.3" x2="167.5" y2="182.8"/>
<line x1="270.9" y1="240.6" x2="270.9" y2="244.1"/>
<line x1="218.0" y1="161.6" x2="218.0" y2="165.1"/>
<line x1="321.4" y1="222.9" x2="321.4" y2="226.4"/>
<line x1="256.2" y1="148.8" x2="256.2" y2="152.3"/>
<line x1="359.6" y1="210.1" x2="359.6" y2="213.6"/>
<line x1="289.7" y1="137.4" x2="289.7" y2="140.9"/>
<line x1="393.1" y1="198.7" x2="393.1" y2="202.2"/>
<line x1="323.0" y1="126.4" x2="323.0" y2="129.9"/>
<line x1="426.4" y1="187.7" x2="426.4" y2="191.2"/>
<line x1="356.2" y1="115.3" x2="356.2" y2="118.8"/>
<line x1="459.6" y1="176.6" x2="459.6" y2="180.1"/>
<line x1="364.5" y1="111.8" x2="364.5" y2="115.3"/>
<line x1="467.9" y1="173.1" x2="467.9" y2="176.6"/>
<line x1="230.9" y1="216.6" x2="230.9" y2="220.1"/>
<line x1="281.4" y1="198.9" x2="281.4" y2="202.4"/>
<line x1="319.6" y1="186.1" x2="319.6" y2="189.6"/>
<line x1="419.6" y1="152.6" x2="419.6" y2="156.1"/>
<line x1="427.9" y1="149.1" x2="427.9" y2="152.6"/>
<line x1="422.4" y1="168.5" x2="422.4" y2="172.0"/>
<line x1="474.1" y1="198.8" x2="474.1" y2="202.2"/>
<line x1="525.9" y1="229.0" x2="525.9" y2="232.5"/>
<line x1="454.5" y1="157.8" x2="454.5" y2="161.2"/>
<line x1="506.2" y1="188.0" x2="506.2" y2="191.5"/>
<line x1="558.0" y1="218.2" x2="558.0" y2="221.8"/>
<line x1="486.6" y1="147.0" x2="486.6" y2="150.5"/>
<line x1="538.3" y1="177.2" x2="538.3" y2="180.8"/>
<line x1="590.0" y1="207.5" x2="590.0" y2="211.0"/>
<line x1="518.7" y1="136.2" x2="518.7" y2="139.8"/>
<line x1="570.4" y1="166.5" x2="570.4" y2="170.0"/>
<line x1="622.2" y1="196.8" x2="622.2" y2="200.2"/>
<line x1="550.8" y1="125.5" x2="550.8" y2="129.0"/>
<line x1="602.5" y1="155.8" x2="602.5" y2="159.2"/>
<line x1="654.2" y1="186.0" x2="654.2" y2="189.5"/>
</g>

<line x1="83.7" y1="415.8" x2="83.7" y2="394" stroke="#1010e0" stroke-width="1.2"/>
<line x1="83.7" y1="415.8" x2="104.5" y2="413" stroke="#20b020" stroke-width="1"/>
<line x1="83.7" y1="415.8" x2="93" y2="422" stroke="#c02020" stroke-width="1"/>
<text x="83.9" y="398.6" font-size="5.5" fill="#1818e8" font-weight="bold">Z</text>
<text x="104.6" y="419.6" font-size="5.5" fill="#20c020" font-weight="bold">Y</text>
<text x="92.6" y="427.6" font-size="5.5" fill="#d02020" font-weight="bold">X</text>

</svg>

<!-- floating panel -->
<div id="fp" class="abs">
 <span class="t" style="left:0.3px;top:4.2px;font-size:6.9px;color:#4a4a4a;">аты эк..</span>
 <div id="fpclose" class="abs"><svg class="abs" style="left:5.6px;top:3px" width="5" height="5" viewBox="0 0 5 5"><path d="M0.6 0.6L4.4 4.4M4.4 0.6L0.6 4.4" stroke="#111" stroke-width="1.2"/></svg></div>
 <div id="fpbody" class="abs">
  <!-- toolbar button w/ colour icon -->
  <div class="btn" style="left:-3px;top:5px;width:5.5px;height:10px;background:#e6e6e6;border-color:#bbb"></div>
  <div class="btn" style="left:21.4px;top:3.8px;width:20px;height:10.6px;">
   <svg class="abs" style="left:4.4px;top:0.6px" width="11" height="9" viewBox="0 0 11 9">
    <rect x="0.5" y="0.4" width="1.4" height="8" fill="#e02020"/><rect x="1.9" y="0.4" width="1.4" height="2.6" fill="#f0e020"/><rect x="1.9" y="3" width="1.4" height="2.6" fill="#20a0e0"/><rect x="1.9" y="5.6" width="1.4" height="2.8" fill="#1a8a2a"/><rect x="3.3" y="0.4" width="1.2" height="4" fill="#2030d0"/><rect x="3.3" y="4.4" width="1.2" height="4" fill="#1a7a2a"/>
    <rect x="6" y="2.6" width="3.6" height="3.6" fill="#fff" stroke="#555" stroke-width="0.8"/>
   </svg>
  </div>
  <!-- small combo "16" -->
  <div class="abs" style="left:21.4px;top:16.8px;width:19.8px;height:9.2px;background:#fff;border:1px solid #c4c4c4;box-sizing:border-box;">
   <span class="t" style="left:1.6px;top:1px;font-size:6.2px;color:#444;">16</span>
   <div class="chev" style="right:2.8px;top:1.8px;"></div>
  </div>
  <!-- grid -->
  <div class="abs" style="left:0;top:28.4px;width:41.2px;height:51.2px;background:#fff;border-top:1px solid #b8bcc4;box-sizing:border-box;"></div>
  <div class="abs" style="left:0;top:29px;width:33.3px;height:8px;background:linear-gradient(#f6f8fb,#dfe6f0);border-bottom:1px solid #c6cedb;box-sizing:border-box;"></div>
  <span class="t" style="left:6.8px;top:30.5px;font-size:5.3px;color:#333;">Критическа</span>
  <span class="t" style="left:1.2px;top:38.6px;font-size:5.6px;color:#222;">0,4</span>
  <div class="abs" style="left:0;top:45.4px;width:33.3px;height:0.8px;background:#d2d2d2;"></div>
  <span class="t" style="left:1.2px;top:47.5px;font-size:5.6px;color:#222;">0,45</span>
  <div class="abs" style="left:0;top:54.4px;width:33.3px;height:0.8px;background:#d2d2d2;"></div>
  <span class="t" style="left:1.2px;top:56.4px;font-size:5.6px;color:#222;">0,49</span>
  <div class="abs" style="left:0;top:63.3px;width:33.3px;height:0.8px;background:#d2d2d2;"></div>
  <span class="t" style="left:1.2px;top:65.2px;font-size:5.6px;color:#222;">0,54</span>
  <!-- v scrollbar -->
  <div class="abs" style="left:33.3px;top:28.8px;width:7.9px;height:43.6px;background:#6c99d4;"></div>
  <div class="abs" style="left:33.7px;top:29.2px;width:7.1px;height:6.6px;background:#eaeff7;border:0.6px solid #9fb4d0;box-sizing:border-box;"></div>
  <svg class="abs" style="left:35px;top:31px" width="4.6" height="3" viewBox="0 0 4.6 3"><path d="M2.3 0.2L4.4 2.8H0.2Z" fill="#26384e"/></svg>
  <div class="abs" style="left:33.7px;top:36.2px;width:7.1px;height:6.2px;background:#dde6f3;border:0.6px solid #a9bcd8;box-sizing:border-box;"></div>
  <div class="abs" style="left:33.7px;top:64.6px;width:7.1px;height:7.2px;background:#eaeff7;border:0.6px solid #9fb4d0;box-sizing:border-box;"></div>
  <svg class="abs" style="left:35px;top:67px" width="4.6" height="3" viewBox="0 0 4.6 3"><path d="M2.3 2.8L4.4 0.2H0.2Z" fill="#26384e"/></svg>
  <!-- h scrollbar -->
  <div class="abs" style="left:0;top:72.4px;width:33.3px;height:7.2px;background:#6c99d4;"></div>
  <div class="abs" style="left:25.6px;top:72.8px;width:7.2px;height:6.4px;background:#eaeff7;border:0.6px solid #9fb4d0;box-sizing:border-box;"></div>
  <svg class="abs" style="left:28px;top:73.9px" width="3" height="4.2" viewBox="0 0 3 4.2"><path d="M0.3 0.2L2.8 2.1L0.3 4Z" fill="#26384e"/></svg>
  <div class="abs" style="left:33.3px;top:72.4px;width:7.9px;height:7.2px;background:#eef1f6;"></div>
  <!-- row below grid -->
  <div class="abs" style="left:0;top:81.2px;width:41.2px;height:6.9px;background:#fff;border:1px solid #e6e6e6;border-left:none;box-sizing:border-box;"></div>
  <span class="t" style="left:-1.6px;top:82px;font-size:5.4px;color:#555;">5</span>
  <div class="abs" style="left:0;top:91.2px;width:41.2px;height:13.6px;background:#fff;border:1px solid #e6e6e6;border-left:none;box-sizing:border-box;"></div>
  <div class="abs" style="left:3.3px;top:91.2px;width:0.8px;height:13.6px;background:#cfcfcf;"></div>
  <span class="t" style="left:4.5px;top:95.2px;font-size:5.3px;color:#333;">Квадратные тр</span>
  <!-- buttons -->
  <span class="t" style="left:-1.8px;top:127px;font-size:6px;color:#333;">ь</span>
  <div class="btn" style="left:4.5px;top:121px;width:10.8px;height:10.8px;">
   <svg class="abs" style="left:1.2px;top:1px" width="8" height="8" viewBox="0 0 8 8"><rect x="0.6" y="0.6" width="5.4" height="5.6" fill="#e8eef8" stroke="#3a4a6a" stroke-width="0.8"/><rect x="0.6" y="0.6" width="5.4" height="1.4" fill="#4a5a7a"/><circle cx="5" cy="5.2" r="2.3" fill="#2a62e0"/><circle cx="5" cy="5.2" r="0.9" fill="#cfe0ff"/></svg>
  </div>
  <div class="btn" style="left:30.2px;top:120.8px;width:10.8px;height:11px;">
   <svg class="abs" style="left:1.2px;top:1.6px" width="8" height="7" viewBox="0 0 8 7"><path d="M0.8 3.6L3 5.8L7.2 0.8" stroke="#a8a8a8" stroke-width="1.4" fill="none"/></svg>
  </div>
  <div class="btn" style="left:30.2px;top:133.4px;width:10.8px;height:9.8px;">
   <svg class="abs" style="left:1px;top:0.6px" width="9" height="8" viewBox="0 0 9 8"><path d="M1 0.8L2.6 4.2L4.4 0.8" stroke="#3aa4e4" stroke-width="1.2" fill="none"/><path d="M1 7.4L2.6 4L4.4 7.4" stroke="#d43434" stroke-width="1.1" fill="none"/><path d="M5.4 2L7.6 1V7L5.4 5.6Z" fill="none" stroke="#555" stroke-width="0.7"/></svg>
  </div>
 </div>
</div>

<!-- docked list pane -->
<div id="lp" class="abs">
 <div id="lpw" class="abs">
  <span class="t" style="top:0.80px">ющие узлы</span>
  <span class="t" style="top:8.47px">вать удаленн</span>
  <span class="t" style="top:16.14px">ое отображе</span>
  <span class="t" style="top:31.48px">вать объеди</span>
  <span class="t" style="top:39.15px">а элементов</span>
  <span class="t" style="top:46.82px">ое отображе</span>
  <span class="t" style="top:54.49px">вать группы</span>
  <span class="t" style="top:62.16px">вать группы</span>
  <span class="t" style="top:69.83px">лементов</span>
  <span class="t" style="top:77.50px">а типов жестк</span>
  <span class="t" style="top:85.17px">ы</span>
  <span class="t" style="top:92.84px">е вставки ст</span>
  <span class="t" style="top:100.51px">жение смещ</span>
  <span class="t" style="top:108.18px">вать удаленн</span>
  <span class="t" style="top:115.85px">вать совпад</span>
  <span class="t" style="top:123.52px">ие оси элеме</span>
  <span class="t" style="top:131.19px">пряжение</span>
  <span class="t" style="top:138.86px">лений выдач</span>
  <span class="t" style="top:146.53px">жесткостны</span>
  <span class="t" style="top:154.20px">  Юнга</span>
  <span class="t" style="top:161.87px">во триангуля</span>
  <span class="t" style="top:169.54px">рические хар</span>
  <span class="t" style="top:177.21px">ые нагрузки н</span>
  <span class="t" style="top:184.88px">ые перемещ</span>
  <span class="t" style="top:192.55px">деленные на</span>
  <span class="t" style="top:200.22px">точенные н</span>
  <span class="t" style="top:207.89px">вать значен</span>
  <span class="t" style="top:215.56px">вать темпер</span>
  <span class="t" style="top:223.23px">аспределен</span>
 </div>
 <div id="sbv" class="abs"></div>
 <div id="sbthumb" class="abs"></div>
 <svg class="abs" style="left:31.9px;top:7.4px" width="4" height="4" viewBox="0 0 4 4"><path d="M0.3 0.6H3.7M0.3 2H3.7M0.3 3.4H3.7" stroke="#666" stroke-width="0.6"/></svg>
 <div class="abs" style="left:31px;top:222.5px;width:7px;height:8.5px;background:#fdfdfd;"></div>
 <svg class="abs" style="left:32px;top:224.5px" width="5" height="4" viewBox="0 0 5 4"><path d="M0.6 0.8L2.5 3L4.4 0.8" stroke="#555" stroke-width="0.7" fill="none"/></svg>
 <!-- h scrollbar -->
 <div class="abs" style="left:0;top:231px;width:31px;height:7.5px;background:#f1f1f1;"></div>
 <div class="abs" style="left:0;top:231.6px;width:22.4px;height:5.6px;background:#fff;"></div>
 <svg class="abs" style="left:24px;top:232.4px" width="4" height="5" viewBox="0 0 4 5"><path d="M0.8 0.6L3 2.5L0.8 4.4" stroke="#555" stroke-width="0.7" fill="none"/></svg>
</div>

<!-- bottom -->
<div id="b1" class="abs"></div><div id="b2" class="abs"></div><div id="b3" class="abs"></div>
<div id="b4" class="abs"></div><div id="b5" class="abs"></div><div id="b5a" class="abs"></div><div id="b6b" class="abs"></div><div id="b7" class="abs"></div><div id="b6" class="abs"></div><div id="b6a" class="abs"></div><div id="b8" class="abs"></div>
<span class="t" style="left:679px;top:478.4px;font-size:6px;color:#444;">Ч:</span><span class="t" style="left:698px;top:478.4px;font-size:6px;color:#444;">1012.5</span>
</body>
</html>
